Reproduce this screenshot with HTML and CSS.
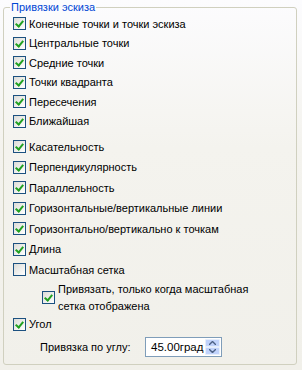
FILE: index.html
```html
<!DOCTYPE html>
<html lang="ru">
<head>
    <meta charset="UTF-8">
    <title>Привязки эскиза</title>
    <link rel="stylesheet" href="styles.css">
</head>
<body>
    <div class="page">
        <fieldset class="group">
            <legend>Привязки эскиза</legend>

            <div class="list first">
                <label class="row"><span class="box on"></span>Конечные точки и точки эскиза</label>
                <label class="row"><span class="box on"></span>Центральные точки</label>
                <label class="row"><span class="box on"></span>Средние точки</label>
                <label class="row"><span class="box on"></span>Точки квадранта</label>
                <label class="row"><span class="box on"></span>Пересечения</label>
                <label class="row"><span class="box on"></span>Ближайшая</label>
            </div>

            <div class="list second">
                <label class="row"><span class="box on"></span>Касательность</label>
                <label class="row"><span class="box on"></span>Перпендикулярность</label>
                <label class="row"><span class="box on"></span>Параллельность</label>
                <label class="row"><span class="box on"></span>Горизонтальные/вертикальные линии</label>
                <label class="row"><span class="box on"></span>Горизонтально/вертикально к точкам</label>
                <label class="row"><span class="box on"></span>Длина</label>
                <label class="row"><span class="box"></span>Масштабная сетка</label>
            </div>

            <label class="row sub"><span class="box on"></span><span>Привязать, только когда масштабная<br>сетка отображена</span></label>
            <label class="row angle-check"><span class="box on"></span>Угол</label>

            <div class="angle">
                <span class="angle-label">Привязка по углу:</span>
                <div class="spin">
                    <span class="spin-value">45.00град</span>
                    <span class="spin-buttons">
                        <span class="spin-btn up"><svg width="7" height="4" viewBox="0 0 7 4"><path d="M0 4 L3.5 0.5 L7 4" fill="none" stroke="#4d6185" stroke-width="1.4"/></svg></span>
                        <span class="spin-btn down"><svg width="7" height="4" viewBox="0 0 7 4"><path d="M0 0 L3.5 3.5 L7 0" fill="none" stroke="#4d6185" stroke-width="1.4"/></svg></span>
                    </span>
                </div>
            </div>
        </fieldset>
    </div>
</body>
</html>
```

FILE: styles.css
```css
body {
    margin: 0;
    font-family: "Liberation Sans", Arial, sans-serif;
    font-size: 11px;
    color: #000;
    background: linear-gradient(#fcfcfe, #f4f3ee 40%, #f1f0ea);
    height: 370px;
}
.page {
    padding: 0 5px 0 3px;
}
.group {
    box-sizing: border-box;
    height: 365px;
    margin: 0;
    padding: 0 0 0 9px;
    border: 1px solid #d0d0bf;
    border-radius: 3px;
}
.group legend {
    color: #0046d5;
    padding: 0 1px;
    margin-left: -3px;
    line-height: 14px;
}
.list {
    display: flex;
    flex-direction: column;
}
.second {
    margin-top: 5.5px;
}
.row {
    display: flex;
    align-items: center;
    gap: 3px;
    height: 19.5px;
    white-space: nowrap;
}
.second .row {
    height: 20.5px;
}
.box {
    box-sizing: border-box;
    flex: none;
    width: 13px;
    height: 13px;
    border: 1px solid #1c5180;
    background: linear-gradient(135deg, #dcdcd7, #ffffff);
    position: relative;
}
.box.on::after {
    content: "";
    position: absolute;
    left: 2px;
    top: 1px;
    width: 3px;
    height: 6px;
    border: solid #21a121;
    border-width: 0 2px 2px 0;
    transform: translate(1px, 0) rotate(40deg);
}
.sub {
    height: 33px;
    margin-left: 29px;
    line-height: 17px;
    margin-top: 1px;
}
.angle-check {
    height: 20px;
}
.angle {
    display: flex;
    align-items: center;
    height: 20px;
    margin-top: 3px;
    padding-left: 27px;
}
.angle-label {
    width: 105px;
}
.spin {
    box-sizing: border-box;
    display: flex;
    align-items: center;
    justify-content: space-between;
    width: 77px;
    height: 20px;
    border: 1px solid #7f9db9;
    background: #fff;
    padding: 1px 1px 1px 5px;
    font-size: 11.5px;
}
.spin-buttons {
    display: flex;
    flex-direction: column;
    width: 15px;
    height: 16px;
}
.spin-btn {
    flex: 1;
    display: flex;
    align-items: center;
    justify-content: center;
    background: #c1d3fb;
    border: 1px solid #e6eefc;
    border-radius: 1px;
}
```
